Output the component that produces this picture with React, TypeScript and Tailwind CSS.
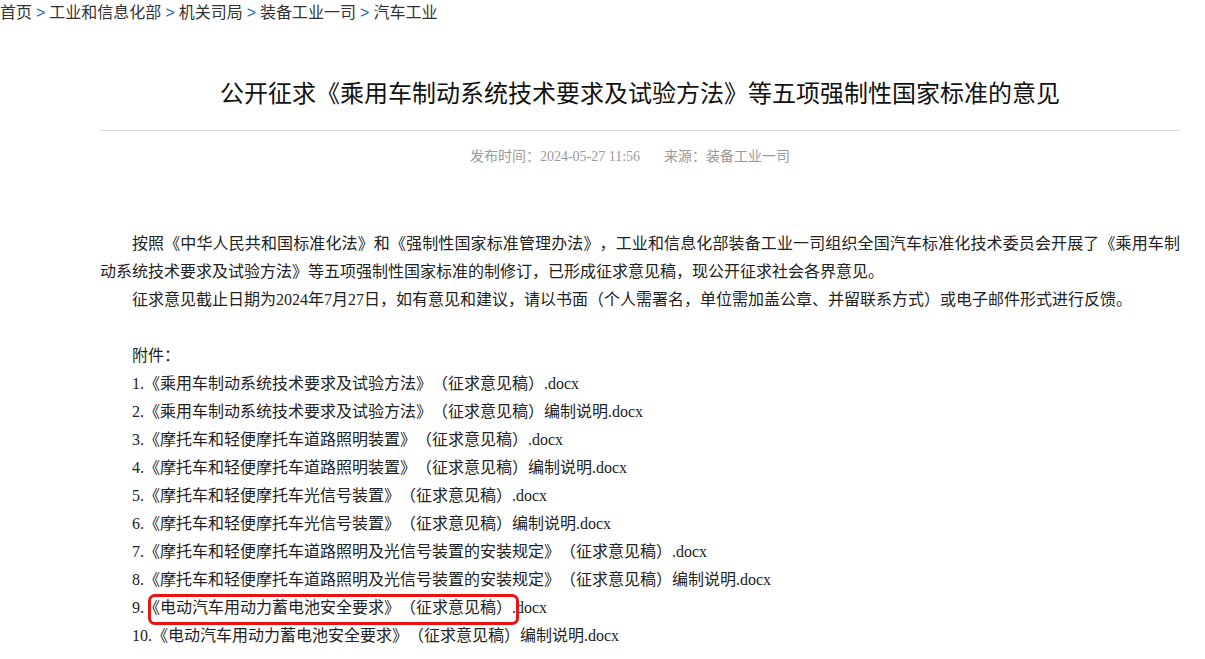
import React from 'react';

const crumbs = ['首页', '工业和信息化部', '机关司局', '装备工业一司', '汽车工业'];

const attachments = [
  '《乘用车制动系统技术要求及试验方法》（征求意见稿）.docx',
  '《乘用车制动系统技术要求及试验方法》（征求意见稿）编制说明.docx',
  '《摩托车和轻便摩托车道路照明装置》（征求意见稿）.docx',
  '《摩托车和轻便摩托车道路照明装置》（征求意见稿）编制说明.docx',
  '《摩托车和轻便摩托车光信号装置》（征求意见稿）.docx',
  '《摩托车和轻便摩托车光信号装置》（征求意见稿）编制说明.docx',
  '《摩托车和轻便摩托车道路照明及光信号装置的安装规定》（征求意见稿）.docx',
  '《摩托车和轻便摩托车道路照明及光信号装置的安装规定》（征求意见稿）编制说明.docx',
  '《电动汽车用动力蓄电池安全要求》（征求意见稿）.docx',
  '《电动汽车用动力蓄电池安全要求》（征求意见稿）编制说明.docx',
];

const Breadcrumb: React.FC = () => (
  <div className="h-[26px] leading-[26px] text-[16px] text-[#333] font-['Liberation_Sans','Noto_Sans_CJK_SC',sans-serif] whitespace-nowrap">
    {crumbs.map((c, i) => (
      <span key={c}>
        {i > 0 && <span className="text-[#1a5fc8] px-[4px]">&gt;</span>}
        {c}
      </span>
    ))}
  </div>
);

export default function App() {
  return (
    <div className="bg-white min-h-[659px] w-[1205px] overflow-hidden">
      <Breadcrumb />

      <div className="ml-[100px] w-[1080px] font-['Liberation_Serif','Noto_Sans_CJK_SC',serif] text-[#222]">
        <h1 className="mt-[50px] text-center text-[24px] leading-[36px] font-normal text-[#111] pb-[18px] border-b border-[#dcdcdc]">
          公开征求《乘用车制动系统技术要求及试验方法》等五项强制性国家标准的意见
        </h1>

        <div className="mt-[14px] text-center text-[14px] leading-[24px] text-[#9a9a9a] pr-5">
          发布时间：2024-05-27 11:56<span className="inline-block w-[24px]" />来源：装备工业一司
        </div>

        {/* 正文：不压缩相邻标点 */}
        <div className="mt-[61px] text-[16px] leading-[28px] [text-spacing-trim:space-all]">
          <div className="pl-8 text-justify [text-align-last:justify] whitespace-nowrap">
            按照《中华人民共和国标准化法》和《强制性国家标准管理办法》，工业和信息化部装备工业一司组织全国汽车标准化技术委员会开展了《乘用车制
          </div>
          <div>动系统技术要求及试验方法》等五项强制性国家标准的制修订，已形成征求意见稿，现公开征求社会各界意见。</div>
          <div className="pl-8">
            征求意见截止日期为2024年7月27日，如有意见和建议，请以书面（个人需署名，单位需加盖公章、并留联系方式）或电子邮件形式进行反馈。
          </div>
          <div className="h-[28px]" />
          <div className="pl-8">附件：</div>
          {attachments.map((a, i) => (
            <div key={i} className="pl-8 relative whitespace-nowrap">
              {i + 1}.{a}
              {i === 8 && (
                <div className="absolute left-[48px] top-0 w-[371px] h-[31px] border-[3px] border-[#ee1111] rounded-[7px]" />
              )}
            </div>
          ))}
        </div>
      </div>
    </div>
  );
}
